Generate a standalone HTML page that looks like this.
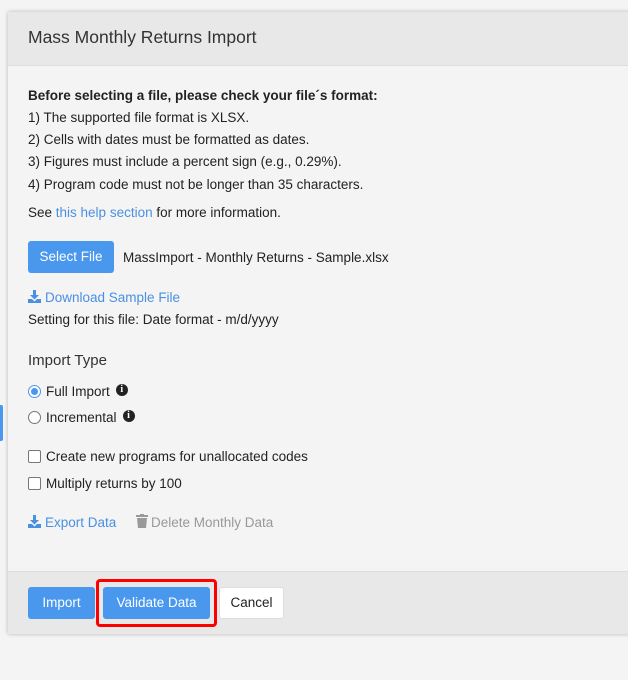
<!DOCTYPE html>
<html><head><meta charset="utf-8"><style>
*{box-sizing:border-box;margin:0;padding:0}
body{width:628px;height:680px;background:#f4f4f4;font-family:"Liberation Sans",sans-serif;font-size:13.5px;color:#222;position:relative;overflow:hidden}
.modal{position:absolute;left:8px;top:12px;width:640px;height:622px;background:#f4f4f4;box-shadow:0 0 4px rgba(0,0,0,.25)}
.hdr{height:54px;background:#e8e8e8;border-bottom:1px solid #ddd;padding:15px 20px;font-size:17.5px;color:#333}
.abs{position:absolute;white-space:nowrap}
.blue{color:#4a90e2}
.btn{position:absolute;background:#4a97ee;color:#fff;border-radius:3px;text-align:center;font-size:13.5px}
.ftr{position:absolute;left:8px;top:571px;width:640px;height:63px;background:#e8e8e8;border-top:1px solid #ddd}
.radio{position:absolute;width:13px;height:13px;border:1px solid #777;border-radius:50%;background:#fff}
.chk{position:absolute;width:13px;height:13px;border:1px solid #777;border-radius:2px;background:#fff}
.info{display:inline-block;width:12px;height:12px;border-radius:50%;background:#222;color:#fff;font-size:10px;font-weight:bold;text-align:center;line-height:12px;vertical-align:4px;margin-left:6px;font-family:"Liberation Serif",serif}
</style></head><body>
<div style="position:absolute;left:0;top:405px;width:3px;height:36px;background:#4a97ee;border-radius:0 2px 2px 0"></div>
<div class="modal">
<div class="hdr">Mass Monthly Returns Import</div>
</div>
<div class="abs" style="left:28px;top:88px;font-weight:bold;font-size:13.5px">Before selecting a file, please check your file´s format:</div>
<div class="abs" style="left:28px;top:110px">1) The supported file format is XLSX.</div>
<div class="abs" style="left:28px;top:132px">2) Cells with dates must be formatted as dates.</div>
<div class="abs" style="left:28px;top:154px">3) Figures must include a percent sign (e.g., 0.29%).</div>
<div class="abs" style="left:28px;top:177px">4) Program code must not be longer than 35 characters.</div>
<div class="abs" style="left:28px;top:205px">See <span class="blue">this help section</span> for more information.</div>
<div class="btn" style="left:28px;top:241px;width:86px;height:32px;line-height:32px">Select File</div>
<div class="abs" style="left:123px;top:250px">MassImport - Monthly Returns - Sample.xlsx</div>
<svg class="abs" style="left:28px;top:290px" width="13" height="13" viewBox="0 0 13 13"><path d="M5 0h3v5h3L6.5 9.5 2 5h3z" fill="#4a90e2"/><path d="M0 9h4l2.5 2.5L9 9h4v4H0z" fill="#4a90e2"/></svg>
<div class="abs blue" style="left:45px;top:290px">Download Sample File</div>
<div class="abs" style="left:28px;top:312px">Setting for this file: Date format - m/d/yyyy</div>
<div class="abs" style="left:28px;top:352px;font-size:15px;color:#333">Import Type</div>
<div class="radio" style="left:28px;top:385px;border-color:#4a97ee"><div style="position:absolute;left:2px;top:2px;width:7px;height:7px;border-radius:50%;background:#4a97ee"></div></div>
<div class="abs" style="left:46px;top:384px">Full Import<span class="info">i</span></div>
<div class="radio" style="left:28px;top:411px"></div>
<div class="abs" style="left:46px;top:410px">Incremental<span class="info">i</span></div>
<div class="chk" style="left:28px;top:450px"></div>
<div class="abs" style="left:46px;top:449px">Create new programs for unallocated codes</div>
<div class="chk" style="left:28px;top:477px"></div>
<div class="abs" style="left:46px;top:476px">Multiply returns by 100</div>
<svg class="abs" style="left:28px;top:515px" width="13" height="13" viewBox="0 0 13 13"><path d="M5 0h3v5h3L6.5 9.5 2 5h3z" fill="#4a90e2"/><path d="M0 9h4l2.5 2.5L9 9h4v4H0z" fill="#4a90e2"/></svg>
<div class="abs blue" style="left:45px;top:515px">Export Data</div>
<svg class="abs" style="left:136px;top:514px" width="12" height="14" viewBox="0 0 12 14"><rect x="0" y="1" width="12" height="2" fill="#999"/><rect x="4" y="0" width="4" height="2" fill="#999"/><path d="M1 4h10l-1 10H2z" fill="#999"/></svg>
<div class="abs" style="left:151px;top:515px;color:#999">Delete Monthly Data</div>
<div class="ftr"></div>
<div class="btn" style="left:28px;top:587px;width:67px;height:32px;line-height:32px">Import</div>
<div style="position:absolute;left:96px;top:579px;width:121px;height:48px;border:3px solid #f00;border-radius:4px"></div>
<div class="btn" style="left:103px;top:587px;width:107px;height:32px;line-height:32px">Validate Data</div>
<div class="btn" style="left:219px;top:587px;width:65px;height:32px;line-height:30px;background:#fff;color:#222;border:1px solid #ddd">Cancel</div>
</body></html>
